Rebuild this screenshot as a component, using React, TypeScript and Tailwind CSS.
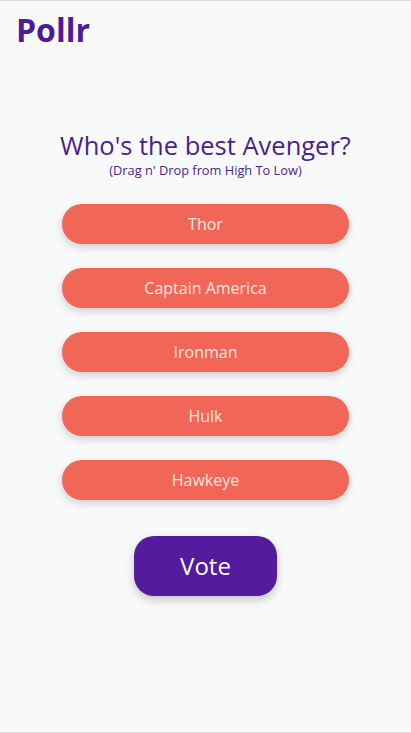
import { useState } from "react";

const heroes = ["Thor", "Captain America", "Ironman", "Hulk", "Hawkeye"];

export default function App() {
  const [items] = useState(heroes);

  return (
    <div className="min-h-[733px] bg-[#f8faf9] border-t border-b border-[#dcdcdc] font-['Open_Sans',sans-serif] flex flex-col">
      <header className="px-4 pt-[5px]">
        <h1 className="text-[32px] font-bold text-[#4f1a96] leading-[48px]">Pollr</h1>
      </header>

      <main className="flex flex-col items-center mt-[75px]">
        <h2 className="text-[25.5px] text-[#4b1f8f] leading-[32px]">Who's the best Avenger?</h2>
        <p className="text-[12.8px] text-[#4b1f8f] leading-[18px]">(Drag n' Drop from High To Low)</p>

        <ul className="mt-[25px] flex flex-col gap-[24px]">
          {items.map((name) => (
            <li
              key={name}
              className="w-[287px] h-[40px] rounded-[20px] bg-[#f26657] text-[#fbeae6] text-[16px] flex items-center justify-center shadow-[0_3px_8px_rgba(0,0,0,0.18)]"
            >
              {name}
            </li>
          ))}
        </ul>

        <button className="mt-[36px] w-[143px] h-[60px] rounded-[20px] bg-[#541b9e] text-white text-[24px] shadow-[0_4px_10px_rgba(0,0,0,0.2)]">
          Vote
        </button>
      </main>
    </div>
  );
}
